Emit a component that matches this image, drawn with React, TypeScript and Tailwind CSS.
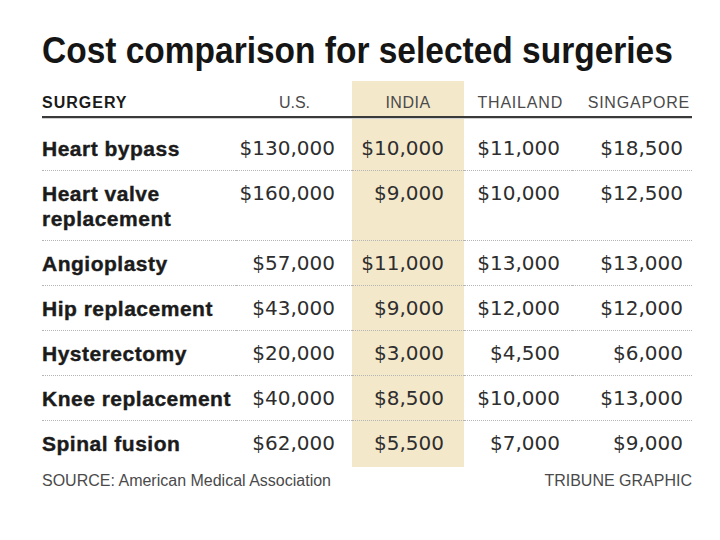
const rows: { name: string[]; us: string; india: string; thailand: string; singapore: string }[] = [
  { name: ['Heart bypass'], us: '$130,000', india: '$10,000', thailand: '$11,000', singapore: '$18,500' },
  { name: ['Heart valve', 'replacement'], us: '$160,000', india: '$9,000', thailand: '$10,000', singapore: '$12,500' },
  { name: ['Angioplasty'], us: '$57,000', india: '$11,000', thailand: '$13,000', singapore: '$13,000' },
  { name: ['Hip replacement'], us: '$43,000', india: '$9,000', thailand: '$12,000', singapore: '$12,000' },
  { name: ['Hysterectomy'], us: '$20,000', india: '$3,000', thailand: '$4,500', singapore: '$6,000' },
  { name: ['Knee replacement'], us: '$40,000', india: '$8,500', thailand: '$10,000', singapore: '$13,000' },
  { name: ['Spinal fusion'], us: '$62,000', india: '$5,500', thailand: '$7,000', singapore: '$9,000' },
];

const cols = 'grid grid-cols-[194px_116px_112px_108px_120px]';
const num = "text-right font-['DejaVu_Sans',sans-serif] text-[20px] text-[#2e2e2e]";

export default function App() {
  return (
    <div className="w-[720px] h-[540px] bg-white px-[42px] pt-[29px] font-['Liberation_Sans',sans-serif]">
      <h1 className="h-[44px] text-[37px] leading-[44px] font-bold text-[#151515] whitespace-nowrap">
        <span className="inline-block origin-left scale-x-[0.905]">Cost comparison for selected surgeries</span>
      </h1>

      <div className="w-[650px] mt-[8px]">
        {/* header */}
        <div className={`${cols} border-b-2 border-[#3a3a3a] text-[16px] leading-[16px] text-[#4a4a4a]`}>
          <div className="pt-[14px] pb-[5px] font-bold text-[#1a1a1a] tracking-[1px]">SURGERY</div>
          <div className="pt-[14px] pb-[5px] text-right pr-[42px]">U.S.</div>
          <div className="pt-[14px] pb-[5px] text-center bg-[#f4e8cb] tracking-[0.5px]">INDIA</div>
          <div className="pt-[14px] pb-[5px] text-right pr-[9px] tracking-[0.8px]">THAILAND</div>
          <div className="pt-[14px] pb-[5px] text-right pr-[2px] tracking-[0.8px]">SINGAPORE</div>
        </div>
        <div className={`${cols} h-[3px] border-t border-[#cfcfcf]`}>
          <div />
          <div />
          <div className="bg-[#f4e8cb]" />
          <div />
          <div />
        </div>

        {/* body */}
        {rows.map((r, i) => {
          const first = i === 0;
          const last = i === rows.length - 1;
          const cell = `${first ? 'pt-[15px]' : 'pt-[10px]'} ${last ? 'pb-[11px]' : 'pb-[9px] border-b border-dotted border-[#b5b5b5]'}`;
          return (
            <div key={i} className={`${cols} leading-[25px]`}>
              <div className={`${cell} text-[21px] font-bold tracking-[0.5px] text-[#1b1b1b] whitespace-nowrap [-webkit-text-stroke:0.4px_#1b1b1b]`}>
                {r.name.map((n) => (
                  <div key={n}>{n}</div>
                ))}
              </div>
              <div className={`${cell} ${num} pr-[17px]`}>{r.us}</div>
              <div className={`${cell} ${num} pr-[20px] bg-[#f4e8cb]`}>{r.india}</div>
              <div className={`${cell} ${num} pr-[12px]`}>{r.thailand}</div>
              <div className={`${cell} ${num} pr-[9px]`}>{r.singapore}</div>
            </div>
          );
        })}

        <div className="flex justify-between mt-[6px] text-[16px] leading-[16px] text-[#4a4a4a]">
          <span>SOURCE: American Medical Association</span>
          <span>TRIBUNE GRAPHIC</span>
        </div>
      </div>
    </div>
  );
}
